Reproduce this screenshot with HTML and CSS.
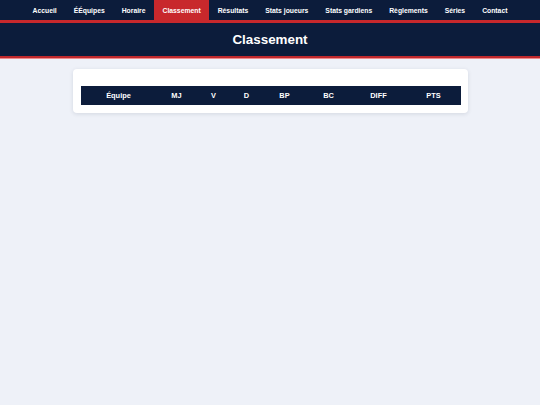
FILE: index.html
```html
<!DOCTYPE html>
<html lang="fr">
<head>
<meta charset="utf-8">
<title>Classement</title>
<link rel="stylesheet" href="styles.css">
</head>
<body>
<nav class="topnav">
  <a class="nav-item" href="#">Accueil</a>
  <a class="nav-item" href="#">ÉÉquipes</a>
  <a class="nav-item" href="#">Horaire</a>
  <a class="nav-item active" href="#">Classement</a>
  <a class="nav-item" href="#">Résultats</a>
  <a class="nav-item" href="#">Stats joueurs</a>
  <a class="nav-item" href="#">Stats gardiens</a>
  <a class="nav-item" href="#">Règlements</a>
  <a class="nav-item" href="#">Séries</a>
  <a class="nav-item" href="#">Contact</a>
</nav>
<header class="page-header">
  <h1 class="page-title">Classement</h1>
</header>
<main class="content">
  <section class="card">
    <table class="standings">
      <colgroup>
        <col class="c-team"><col class="c-mj"><col class="c-v"><col class="c-d">
        <col class="c-bp"><col class="c-bc"><col class="c-diff"><col class="c-pts">
      </colgroup>
      <thead>
        <tr>
          <th>Équipe</th><th>MJ</th><th>V</th><th>D</th><th>BP</th><th>BC</th><th>DIFF</th><th>PTS</th>
        </tr>
      </thead>
      <tbody></tbody>
    </table>
  </section>
</main>
</body>
</html>
```
FILE: styles.css
```css
html, body {
  margin: 0;
  padding: 0;
}
body {
  background: #eef1f8;
  font-family: "Liberation Sans", Arial, sans-serif;
  min-height: 405px;
}
.topnav {
  display: flex;
  justify-content: center;
  background: #0c1c3b;
  height: 20px;
  border-bottom: 3px solid #c8282c;
}
.nav-item {
  display: flex;
  align-items: center;
  padding: 0 8.5px;
  color: #ffffff;
  font-size: 6.8px;
  font-weight: bold;
  text-decoration: none;
  white-space: nowrap;
}
.nav-item.active {
  background: #c8282c;
}
.page-header {
  background: #0c1c3b;
  height: 33px;
  display: flex;
  align-items: center;
  justify-content: center;
  border-bottom: 2px solid #c0282c;
  box-shadow: 0 1px 0 #ee8a8c;
}
.page-title {
  margin: 0;
  color: #ffffff;
  font-size: 13.4px;
  font-weight: bold;
}
.content {
  padding-top: 11px;
  display: flex;
  justify-content: center;
}
.card {
  width: 395px;
  box-sizing: border-box;
  background: #ffffff;
  border-radius: 4px;
  box-shadow: 0 1px 4px rgba(20, 30, 60, 0.12);
  padding: 17px 8px 8px;
}
.standings {
  width: 380px;
  border-collapse: collapse;
  table-layout: fixed;
}
.standings th {
  background: #0c1c3b;
  color: #ffffff;
  font-size: 7.4px;
  font-weight: bold;
  height: 19px;
  padding: 0;
  text-align: center;
}
.c-team { width: 76px; }
.c-mj { width: 40px; }
.c-v { width: 34px; }
.c-d { width: 32px; }
.c-bp { width: 44px; }
.c-bc { width: 44px; }
.c-diff { width: 56px; }
.c-pts { width: 54px; }
```
